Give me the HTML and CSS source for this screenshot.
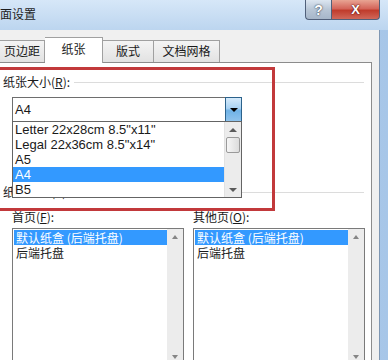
FILE: index.html
```html
<!DOCTYPE html>
<html lang="zh-CN">
<head>
    <meta charset="UTF-8">
    <title>页面设置</title>
    <link rel="stylesheet" href="styles.css">
</head>
<body>

    <div class="window">
        <!-- Title bar -->
        <div class="titlebar">
            <span class="title">面设置</span>
            <div class="caption-buttons">
                <span class="cap-btn help">?</span>
                <span class="cap-btn close">X</span>
            </div>
        </div>

        <div class="client">
            <div class="tabs">
                <div class="tab" style="width:46px;">页边距</div>
                <div class="tab active" style="width:58px;">纸张</div>
                <div class="tab" style="width:51px;">版式</div>
                <div class="tab" style="width:66px;">文档网格</div>
            </div>

            <div class="panel">
                <div class="group-head size-head"><span>纸张大小(<u>R</u>):</span></div>

                <div class="combo">
                    <span class="combo-value">A4</span>
                    <span class="combo-btn"><i class="tri-down"></i></span>

                    <!-- open dropdown list -->
                    <div class="dropdown">
                        <ul class="drop-items">
                            <li>Letter 22x28cm 8.5"x11"</li>
                            <li>Legal 22x36cm 8.5"x14"</li>
                            <li>A5</li>
                            <li class="selected">A4</li>
                            <li>B5</li>
                        </ul>
                        <div class="vscroll">
                            <span class="sb-arrow"><i class="tri-up-sm"></i></span>
                            <span class="sb-thumb"></span>
                            <span class="sb-track"></span>
                            <span class="sb-arrow"><i class="tri-down-sm"></i></span>
                        </div>
                    </div>
                </div>

                <div class="group-head source-head"><span>纸张来源(S):</span></div>

                <div class="trays">
                    <div class="tray">
                        <label>首页(<u>F</u>):</label>
                        <div class="listbox">
                            <ul class="list-items">
                                <li class="selected">默认纸盒 (后端托盘)</li>
                                <li>后端托盘</li>
                            </ul>
                            <div class="list-scroll">
                                <i class="tri-up-sm"></i>
                                <i class="tri-down-sm"></i>
                            </div>
                        </div>
                    </div>
                    <div class="tray">
                        <label>其他页(<u>O</u>):</label>
                        <div class="listbox">
                            <ul class="list-items">
                                <li class="selected">默认纸盒 (后端托盘)</li>
                                <li>后端托盘</li>
                            </ul>
                            <div class="list-scroll">
                                <i class="tri-up-sm"></i>
                                <i class="tri-down-sm"></i>
                            </div>
                        </div>
                    </div>
                </div>
            </div>
        </div>

        <!-- annotation box drawn over the screenshot -->
        <div class="highlight"></div>
    </div>

</body>
</html>
```

FILE: styles.css
```css
body {
    margin: 0;
    font-family: "Noto Sans CJK SC", "Liberation Sans", sans-serif;
    font-size: 12px;
    color: #1a1a1a;
    background: #f0f0f0;
}
ul {
    list-style: none;
    margin: 0;
    padding: 0;
}
u {
    text-decoration: underline;
    text-underline-offset: 1px;
}
.window {
    position: relative;
    width: 388px;
    height: 360px;
    overflow: hidden;
    background: linear-gradient(to right, #c6dbf1, #a7c6e8);
}
.titlebar {
    display: flex;
    justify-content: space-between;
    align-items: flex-start;
    height: 30px;
    background: linear-gradient(#d6e7f8, #bcd5ef);
}
.title {
    padding: 6px 0 0 0;
    line-height: 16px;
    color: #1e1e1e;
}
.caption-buttons {
    display: flex;
    margin-right: 8px;
}
.cap-btn {
    display: flex;
    align-items: center;
    justify-content: center;
    height: 20px;
    box-sizing: border-box;
    border: 1px solid #50607a;
    border-top: none;
    font-family: "Liberation Sans", sans-serif;
    font-weight: bold;
    color: #fff;
}
.help {
    width: 26px;
    border-right: none;
    border-radius: 0 0 0 4px;
    background: linear-gradient(#dce6f1, #b8c6d6 50%, #a6b6c9);
    font-size: 14px;
    text-shadow: 0 0 2px #404a58, 0 0 1px #404a58;
}
.close {
    width: 49px;
    border-radius: 0 0 4px 0;
    background: linear-gradient(#e8a493, #d4655a 45%, #c03c2c 55%, #d0685a);
    font-size: 13px;
    text-shadow: 0 0 2px #5a1010, 0 0 1px #5a1010;
}
.client {
    height: 330px;
    margin-right: 8px;
    padding-top: 7px;
    box-sizing: border-box;
    background: #f0f0f0;
    border-right: 1px solid #7f97b3;
}
.tabs {
    display: flex;
    align-items: flex-end;
    height: 25px;
    margin-left: -1px;
}
.tab {
    height: 22px;
    box-sizing: border-box;
    border: 1px solid #a0a0a0;
    border-left: none;
    border-bottom: none;
    background: linear-gradient(#f4f4f4, #e2e2e2);
    text-align: center;
    line-height: 20px;
}
.tab:first-child {
    border-left: 1px solid #a0a0a0;
}
.tab.active {
    position: relative;
    z-index: 1;
    height: 26px;
    margin-bottom: -1px;
    background: #fff;
    line-height: 22px;
}
.panel {
    height: 300px;
    margin: 0 7px 0 -10px;
    padding-left: 12px;
    background: #fff;
    border: 1px solid #8c8c8c;
}
.group-head {
    display: flex;
    align-items: center;
    height: 16px;
    line-height: 16px;
}
.group-head::after {
    content: "";
    flex: 1;
    margin: 0 7px 0 4px;
    border-top: 1px solid #dcdcdc;
}
.size-head {
    margin-top: 11px;
}
.source-head {
    margin-top: 62px;
}
.combo {
    position: relative;
    z-index: 2;
    display: flex;
    justify-content: space-between;
    width: 230px;
    height: 25px;
    margin: 7px 0 0 9px;
    box-sizing: border-box;
    border: 1px solid #6e6e6e;
    font-family: "Liberation Sans", "Noto Sans CJK SC", sans-serif;
    font-size: 13px;
}
.combo-value {
    padding-left: 2px;
    line-height: 23px;
}
.combo-btn {
    display: flex;
    align-items: center;
    justify-content: center;
    width: 17px;
    margin: -1px -1px -1px 0;
    box-sizing: border-box;
    border: 1px solid #2c628b;
    background: linear-gradient(#d6ebfb, #a9d2f3 45%, #6fb2e6 55%, #8fc3ec);
}
.tri-down {
    border-left: 4px solid transparent;
    border-right: 4px solid transparent;
    border-top: 4px solid #000;
}
.tri-up-sm {
    display: block;
    border-left: 4px solid transparent;
    border-right: 4px solid transparent;
    border-bottom: 4px solid #5a5a5a;
}
.tri-down-sm {
    display: block;
    border-left: 4px solid transparent;
    border-right: 4px solid transparent;
    border-top: 4px solid #5a5a5a;
}
.dropdown {
    position: absolute;
    top: 23px;
    left: -1px;
    display: flex;
    width: 230px;
    box-sizing: border-box;
    background: #fff;
    border: 1px solid #646464;
}
.drop-items {
    flex: 1;
}
.drop-items li {
    height: 15px;
    padding-left: 2px;
    line-height: 15px;
}
.selected {
    background: #3399ff;
    color: #fff;
}
.vscroll {
    display: flex;
    flex-direction: column;
    width: 16px;
    background: #ececec;
    border-left: 1px solid #e2e2e2;
}
.sb-arrow {
    display: flex;
    align-items: center;
    justify-content: center;
    height: 15px;
}
.sb-thumb {
    height: 16px;
    margin: 0 1px;
    box-sizing: border-box;
    border: 1px solid #9a9a9a;
    border-radius: 2px;
    background: linear-gradient(to right, #f6f6f6, #dcdcdc);
}
.sb-track {
    flex: 1;
}
.trays {
    display: flex;
    gap: 9px;
    margin: 9px 0 0 9px;
}
.tray label {
    display: block;
    height: 16px;
    line-height: 16px;
}
.listbox {
    display: flex;
    width: 172px;
    height: 136px;
    margin-top: 3px;
    box-sizing: border-box;
    border: 1px solid #7a7a7a;
}
.list-items {
    flex: 1;
    padding: 1px 0 0 1px;
}
.list-items li {
    height: 15px;
    padding-left: 2px;
    line-height: 15px;
    white-space: nowrap;
}
.list-scroll {
    display: flex;
    flex-direction: column;
    justify-content: space-between;
    align-items: center;
    width: 16px;
    padding: 6px 0 4px;
    box-sizing: border-box;
    background: #ececec;
}
.list-scroll i {
    border-left-width: 3px;
    border-right-width: 3px;
    opacity: 0.7;
}
.highlight {
    position: absolute;
    left: -10px;
    top: 67px;
    width: 285px;
    height: 144px;
    box-sizing: border-box;
    border: 3px solid #c2393b;
}
```
